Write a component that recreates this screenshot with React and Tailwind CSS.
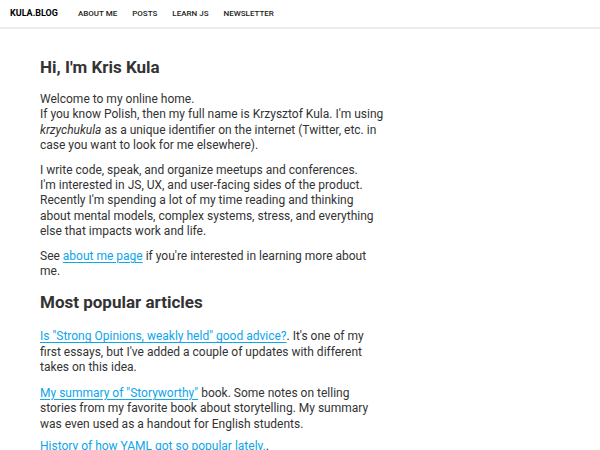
import React from "react";

const navLinks = ["About me", "Posts", "Learn JS", "Newsletter"];

const Link = ({ children }) => (
  <a href="#" className="text-[#0ea5e9] underline decoration-1 underline-offset-2">
    {children}
  </a>
);

const App = () => {
  return (
    <div className="min-h-[450px] bg-white text-[#333] font-['Roboto',sans-serif]">
      <header className="h-[29px] flex items-center px-[10px] border-b-2 border-[#ececec] uppercase">
        <span className="text-[9px] font-bold text-black mr-[20px]">kula.blog</span>
        <nav className="flex gap-[15px] text-[8px] font-medium text-[#222]">
          {navLinks.map((l) => (
            <a key={l} href="#">
              {l}
            </a>
          ))}
        </nav>
      </header>

      <main className="ml-10 pt-[26px] w-[345px] text-[12px] leading-[15.4px]">
        <h1 className="text-[17px] font-bold leading-6 mb-[13px]">
          Hi, I'm Kris Kula
        </h1>
        <p className="mb-[9px]">
          Welcome to my online home.
          <br />
          If you know Polish, then my full name is Krzysztof Kula. I'm using{" "}
          <em>krzychukula</em> as a unique identifier on the internet (Twitter,
          etc. in case you want to look for me elsewhere).
        </p>
        <p className="mb-[9px]">
          I write code, speak, and organize meetups and conferences.
          <br />
          I'm interested in JS, UX, and user-facing sides of the product.
          <br />
          Recently I'm spending a lot of my time reading and thinking about
          mental models, complex systems, stress, and everything else that
          impacts work and life.
        </p>
        <p className="mb-[11px]">
          See <Link>about me page</Link> if you're interested in learning more
          about me.
        </p>
        <h2 className="text-[17px] font-bold leading-6 mb-[15px]">
          Most popular articles
        </h2>
        <p className="mb-[10px]">
          <Link>Is "Strong Opinions, weakly held" good advice?</Link>. It's one
          of my first essays, but I've added a couple of updates with different
          takes on this idea.
        </p>
        <p className="mb-[7px]">
          <Link>My summary of "Storyworthy"</Link> book. Some notes on telling
          stories from my favorite book about storytelling. My summary was even
          used as a handout for English students.
        </p>
        <p className="mb-[9px]">
          <Link>History of how YAML got so popular lately.</Link>.
        </p>
      </main>
    </div>
  );
};

export default App;
